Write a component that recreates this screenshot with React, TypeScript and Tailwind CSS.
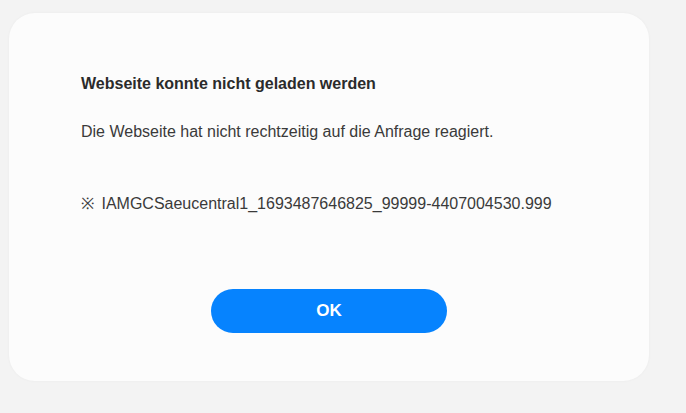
export default function App() {
  return (
    <div className="w-[686px] h-[413px] bg-[#f3f3f3] pt-[13px] pl-[9px]" style={{ fontFamily: '"Liberation Sans", Arial, sans-serif' }}>
      <div className="w-[640px] h-[368px] bg-[#fcfcfc] rounded-[26px] shadow-[0_0_3px_rgba(0,0,0,0.04)] flex flex-col pl-[72px] pt-[62px]">
        <div className="text-[16px] leading-[18px] font-bold text-[#2b2b2b]">Webseite konnte nicht geladen werden</div>
        <div className="mt-[30px] text-[16px] leading-[18px] text-[#3a3a3a]">Die Webseite hat nicht rechtzeitig auf die Anfrage reagiert.</div>
        <div className="mt-[54px] text-[16px] leading-[18px] text-[#3a3a3a]"><span className="mr-[3px]">※</span> IAMGCSaeucentral1_1693487646825_99999-4407004530.999</div>
        <div className="mt-[76px] pl-[130px]">
          <button className="w-[236px] h-[44px] rounded-full bg-[#0683fe] text-white text-[17px] font-bold flex items-center justify-center">OK</button>
        </div>
      </div>
    </div>
  );
}
